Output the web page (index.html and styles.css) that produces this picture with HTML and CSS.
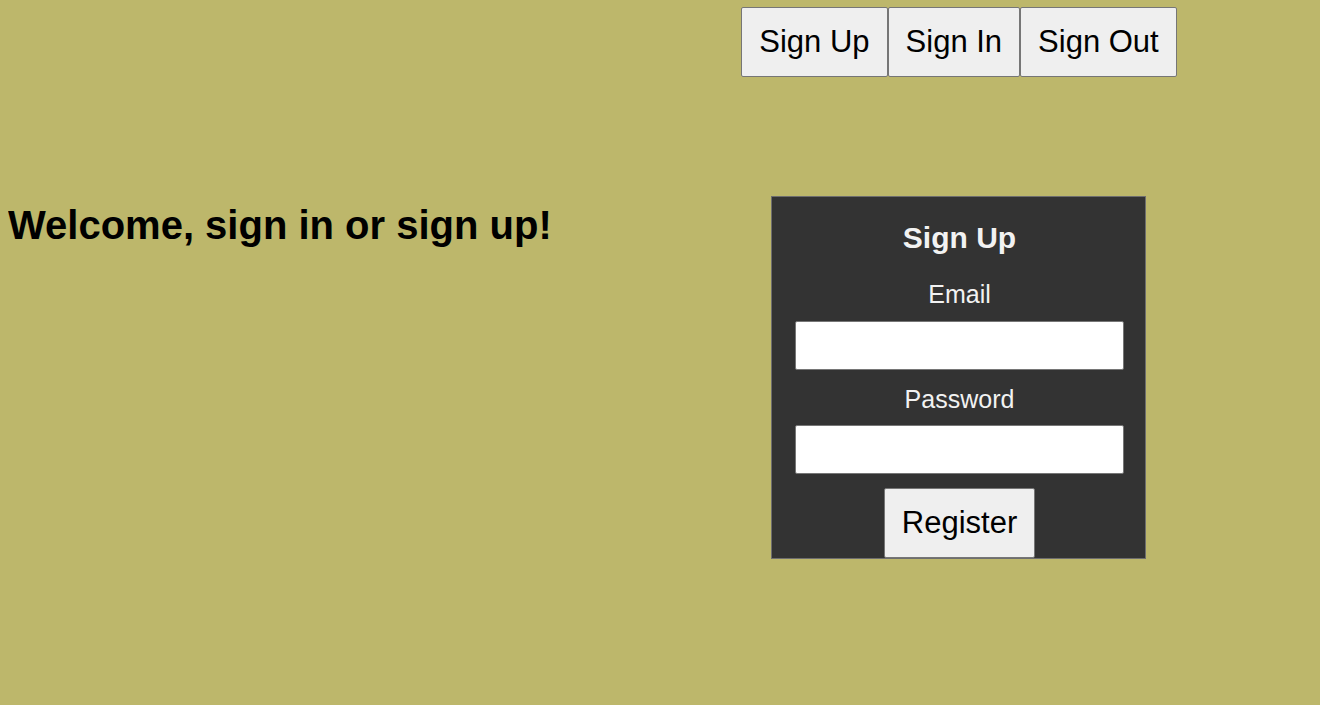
FILE: index.html
```html
<!DOCTYPE html>
<html lang="en">
<head>
<meta charset="utf-8">
<title>Welcome</title>
<link rel="stylesheet" href="styles.css">
</head>
<body>
  <header class="top">
    <div class="spacer"></div>
    <nav class="nav">
      <button class="btn" type="button">Sign Up</button><button class="btn" type="button">Sign In</button><button class="btn" type="button">Sign Out</button>
    </nav>
  </header>
  <main class="main">
    <section class="intro">
      <h1 class="title">Welcome, sign in or sign up!</h1>
    </section>
    <section class="side">
      <form class="panel">
        <h2 class="panel-title">Sign Up</h2>
        <label class="label" for="email">Email</label>
        <input class="field field-first" id="email" type="email">
        <label class="label" for="password">Password</label>
        <input class="field field-last" id="password" type="password">
        <button class="btn" type="button">Register</button>
      </form>
    </section>
  </main>
</body>
</html>
```
FILE: styles.css
```css
html, body {
  background: #bdb76b;
}

body {
  margin: 7px 8px 8px;
  font-family: "Liberation Sans", Arial, sans-serif;
  color: #000;
}

.top,
.main {
  display: grid;
  grid-template-columns: 598px 706px;
}

.nav {
  display: flex;
  justify-content: center;
}

.btn {
  font-family: "Liberation Sans", Arial, sans-serif;
  font-size: 31px;
  line-height: 36px;
  height: 70px;
  padding: 0 17px;
  background: #efefef;
  color: #000;
  border: 1px solid #767676;
  border-radius: 2px;
  margin: 0;
  box-sizing: border-box;
}

.intro {
  padding-top: 125px;
}

.title {
  margin: 0;
  font-size: 40px;
  line-height: 46px;
  font-weight: bold;
}

.side {
  display: flex;
  justify-content: center;
  padding-top: 119px;
}

.panel {
  width: 375px;
  box-sizing: border-box;
  margin-left: -1px;
  padding: 0 21px 0 23px;
  background: #333;
  border: 1px solid #6e6e6e;
  display: flex;
  flex-direction: column;
  align-items: center;
  color: #f2f2f2;
}

.panel-title {
  margin: 24px 0 25px;
  font-size: 30px;
  line-height: 34px;
  font-weight: bold;
}

.label {
  display: block;
  font-size: 25px;
  line-height: 29px;
}

.field {
  width: 100%;
  height: 49px;
  box-sizing: border-box;
  background: #fff;
  border: 1px solid #767676;
  border-radius: 2px;
  padding: 0 4px;
  font-size: 20px;
}

.field-first {
  margin: 12px 0 15px;
}

.field-last {
  margin: 11px 0 14px;
}
```
